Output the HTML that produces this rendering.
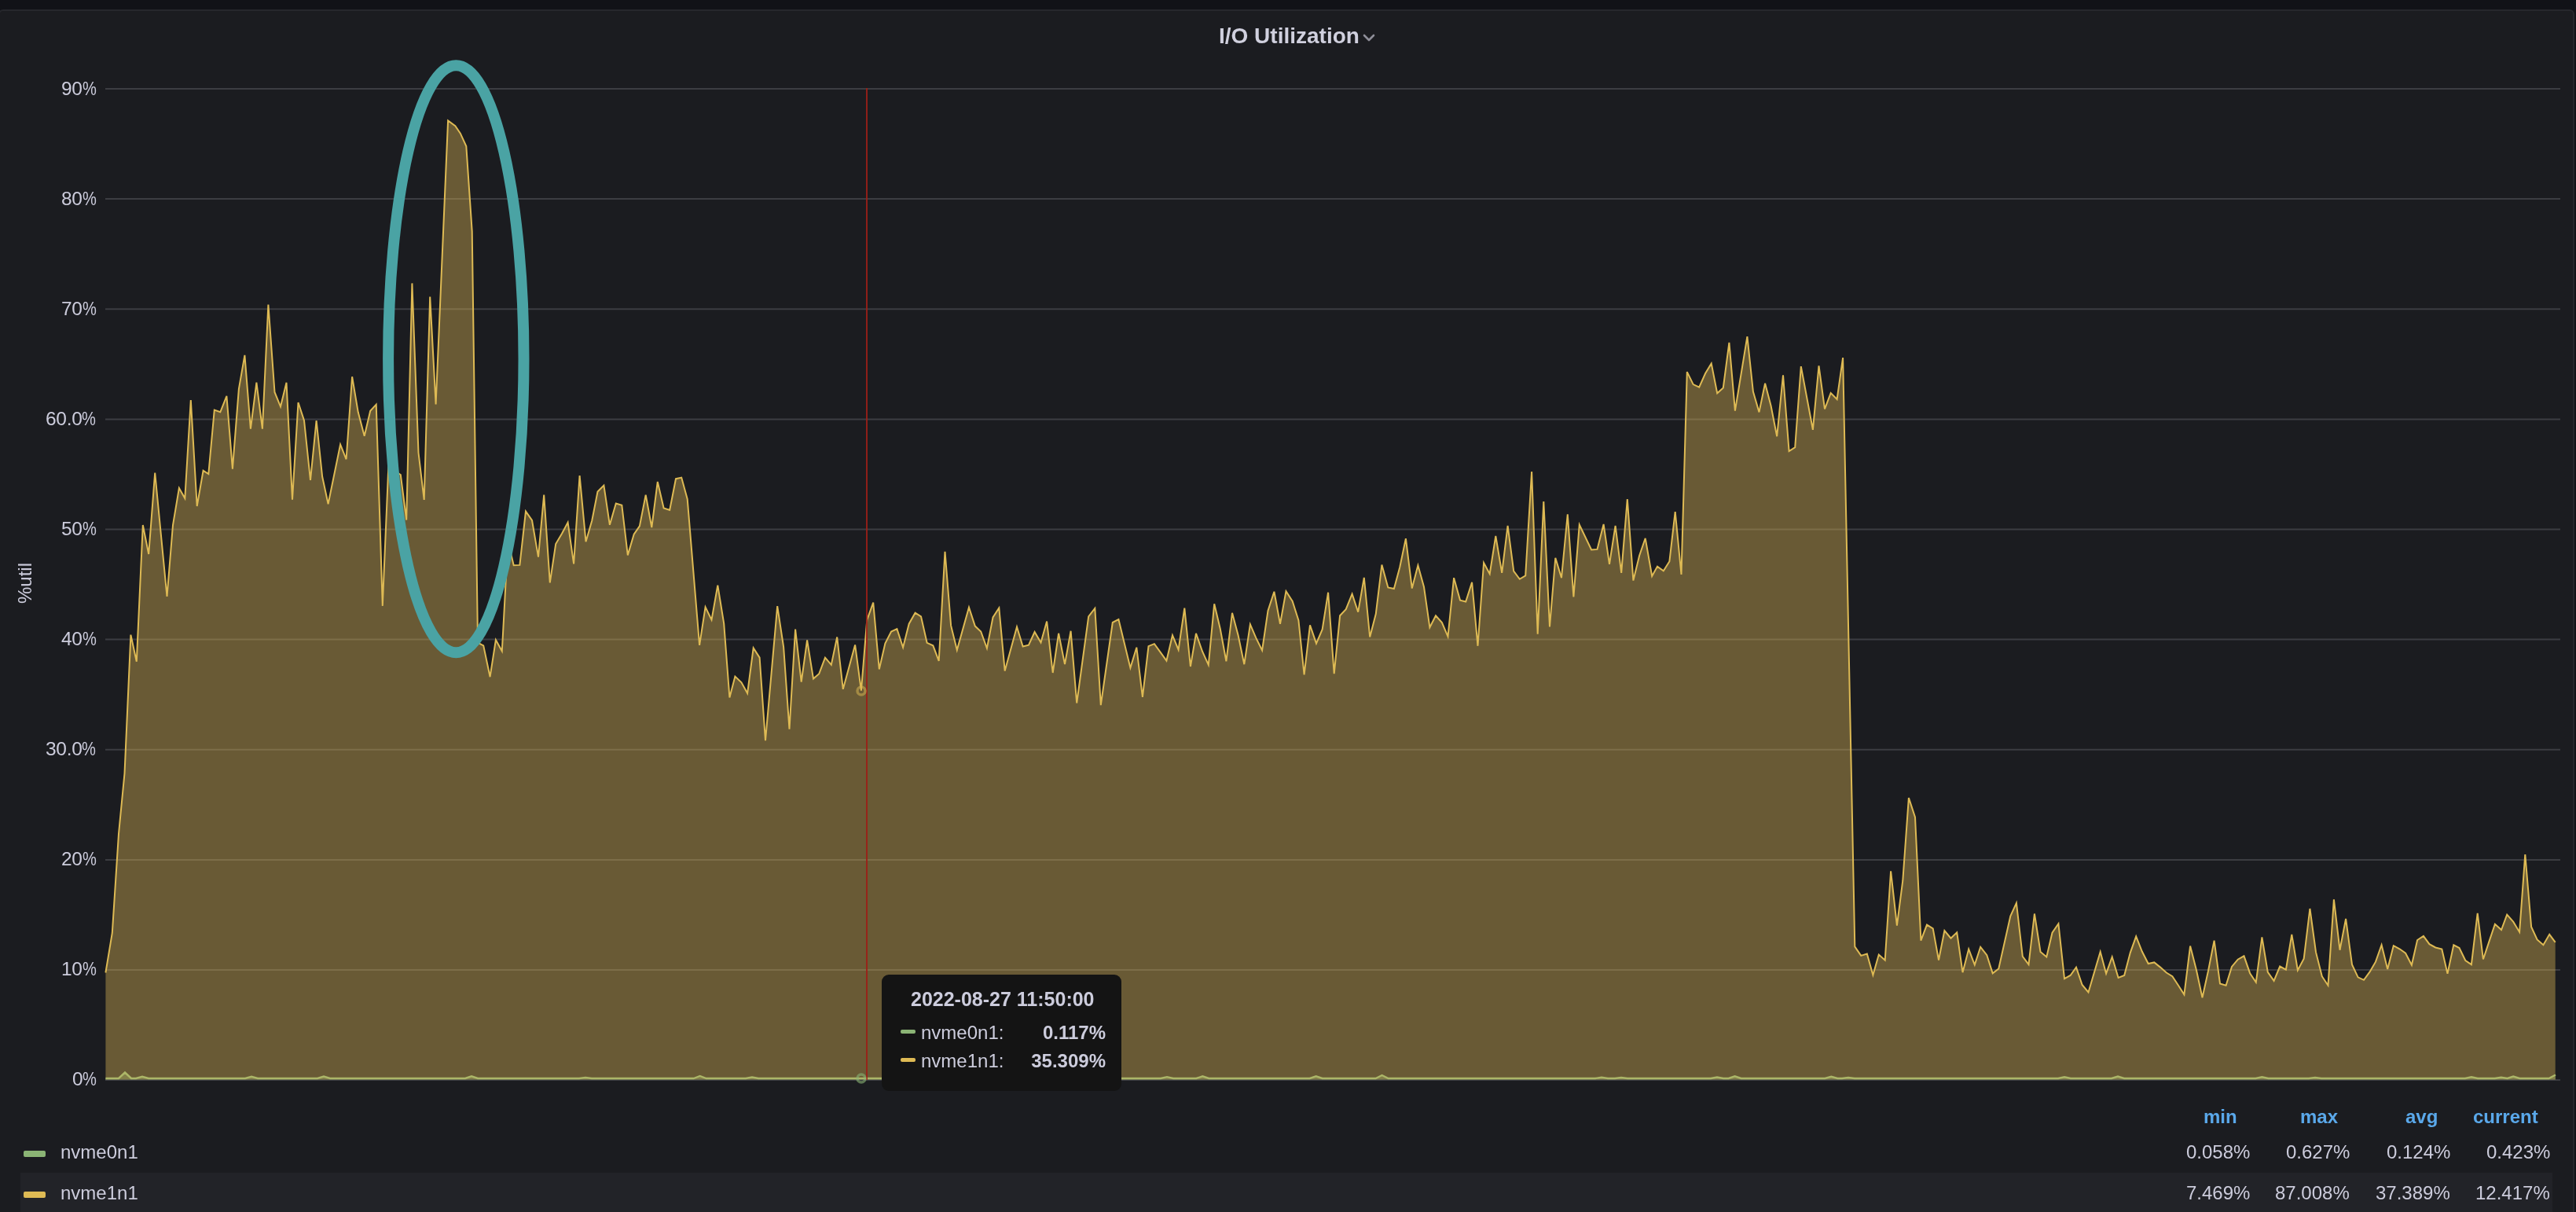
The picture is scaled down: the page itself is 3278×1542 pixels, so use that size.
<!DOCTYPE html>
<html><head><meta charset="utf-8">
<style>
html,body{margin:0;padding:0}
body{width:3278px;height:1542px;overflow:hidden;background:#111217;position:relative;font-family:"Liberation Sans",sans-serif;color:#ccccdc}
.panel{position:absolute;left:-2px;top:12px;width:3278px;height:1600px;background:#1b1c20;border:2px solid #26272c;border-radius:6px;box-sizing:border-box}
.title{position:absolute;left:1551px;top:28.5px;font-size:28px;font-weight:bold;color:#d0d0de;white-space:nowrap;line-height:34px}
.chev{position:absolute;left:1734px;top:43px}
.yl{position:absolute;right:3155.5px;font-size:24.5px;letter-spacing:-0.3px;line-height:28px;color:#ccccdc;white-space:nowrap;text-align:right}
.pc{display:inline-block;transform:scaleX(.82);transform-origin:0 50%;margin-right:-.16em}
.ylab{position:absolute;left:32px;top:742px;transform:translate(-50%,-50%) rotate(-90deg);font-size:24px;line-height:28px;white-space:nowrap}
svg{position:absolute;left:0;top:0}
.title,.yl,.ylab,.lg,.hd,.val,.tt{will-change:transform}
.lg{position:absolute;font-size:24px;line-height:28px;white-space:nowrap}
.sw{position:absolute;border-radius:2px;height:8px;width:28px}
.hd{position:absolute;font-size:24px;font-weight:bold;color:#5aa8ea;line-height:28px;white-space:nowrap;text-align:right}
.val{position:absolute;font-size:24px;line-height:28px;white-space:nowrap;text-align:right}
.hl{position:absolute;left:26px;top:1492px;width:3222px;height:60px;background:#222328}
.tt{position:absolute;left:1122px;top:1240px;width:305px;height:148px;background:#141414;border-radius:9px}
.tt .d{position:absolute;left:37px;top:17px;font-size:25px;font-weight:bold;white-space:nowrap;line-height:28px}
.tt .sw2{position:absolute;left:24px;width:19px;height:5px;border-radius:2px}
.tt .l{position:absolute;left:50px;font-size:24px;white-space:nowrap;line-height:28px}
.tt .v{position:absolute;right:20px;font-size:24px;font-weight:bold;white-space:nowrap;line-height:28px;text-align:right}
</style></head><body>
<div class="panel"></div>
<div class="title">I/O Utilization</div>
<svg class="chev" width="16" height="12" viewBox="0 0 16 12"><path d="M2 2 L8 8 L14 2" fill="none" stroke="#8e8e98" stroke-width="2.6" stroke-linecap="round" stroke-linejoin="round"/></svg>
<div class="yl" style="top:99px">90<span class="pc">%</span></div><div class="yl" style="top:239px">80<span class="pc">%</span></div><div class="yl" style="top:379px">70<span class="pc">%</span></div><div class="yl" style="top:519px">60.0<span class="pc">%</span></div><div class="yl" style="top:659px">50<span class="pc">%</span></div><div class="yl" style="top:799px">40<span class="pc">%</span></div><div class="yl" style="top:939px">30.0<span class="pc">%</span></div><div class="yl" style="top:1079px">20<span class="pc">%</span></div><div class="yl" style="top:1219px">10<span class="pc">%</span></div><div class="yl" style="top:1359px">0<span class="pc">%</span></div>
<div class="ylab">%util</div>
<svg width="3278" height="1542" viewBox="0 0 3278 1542">
<g stroke="#3c3d42" stroke-width="2"><line x1="134" y1="113.0" x2="3258" y2="113.0"/><line x1="134" y1="253.1" x2="3258" y2="253.1"/><line x1="134" y1="393.2" x2="3258" y2="393.2"/><line x1="134" y1="533.4" x2="3258" y2="533.4"/><line x1="134" y1="673.5" x2="3258" y2="673.5"/><line x1="134" y1="813.6" x2="3258" y2="813.6"/><line x1="134" y1="953.8" x2="3258" y2="953.8"/><line x1="134" y1="1093.9" x2="3258" y2="1093.9"/><line x1="134" y1="1234.0" x2="3258" y2="1234.0"/><line x1="134" y1="1374.1" x2="3258" y2="1374.1"/></g>
<path d="M134.4,1373.5 L134.4,1372 151,1372 159,1364.5 167,1372 173,1372 181,1369.8 189,1372 312,1372 320,1369.8 328,1372 404,1372 412,1369.5 420,1372 592,1372 600,1369.3 608,1372 737,1372 745,1371 753,1372 882.7,1372 890.7,1369 898.7,1372 949,1372 957,1370.5 965,1372 1477,1372 1485,1370.2 1493,1372 1522.3,1372 1530.3,1369.3 1538.3,1372 1666.7,1372 1674.7,1369.3 1682.7,1372 1750.6,1372 1758.6,1368 1766.6,1372 2030,1372 2038,1370.8 2046,1372 2055,1372 2063,1371 2071,1372 2177,1372 2185,1370.5 2193,1372 2199.6,1372 2207.6,1369.3 2215.6,1372 2322.3,1372 2330.3,1369.8 2338.3,1372 2344,1372 2352,1371 2360,1372 2619,1372 2627,1370.3 2635,1372 2687,1372 2695,1369.5 2703,1372 2870.4,1372 2878.4,1370.3 2886.4,1372 2938,1372 2946,1371 2954,1372 3136.9,1372 3144.9,1370.3 3152.9,1372 3174.7,1372 3182.7,1370.8 3190.7,1372 3198.2,1369.6 3206.2,1372 3243.5,1372 3252,1367.5 L3252,1373.5 Z" fill="#8bb475" fill-opacity="0.4"/>
<polyline points="134.4,1372 151,1372 159,1364.5 167,1372 173,1372 181,1369.8 189,1372 312,1372 320,1369.8 328,1372 404,1372 412,1369.5 420,1372 592,1372 600,1369.3 608,1372 737,1372 745,1371 753,1372 882.7,1372 890.7,1369 898.7,1372 949,1372 957,1370.5 965,1372 1477,1372 1485,1370.2 1493,1372 1522.3,1372 1530.3,1369.3 1538.3,1372 1666.7,1372 1674.7,1369.3 1682.7,1372 1750.6,1372 1758.6,1368 1766.6,1372 2030,1372 2038,1370.8 2046,1372 2055,1372 2063,1371 2071,1372 2177,1372 2185,1370.5 2193,1372 2199.6,1372 2207.6,1369.3 2215.6,1372 2322.3,1372 2330.3,1369.8 2338.3,1372 2344,1372 2352,1371 2360,1372 2619,1372 2627,1370.3 2635,1372 2687,1372 2695,1369.5 2703,1372 2870.4,1372 2878.4,1370.3 2886.4,1372 2938,1372 2946,1371 2954,1372 3136.9,1372 3144.9,1370.3 3152.9,1372 3174.7,1372 3182.7,1370.8 3190.7,1372 3198.2,1369.6 3206.2,1372 3243.5,1372 3252,1367.5" fill="none" stroke="#8bb475" stroke-width="2.4"/>
<path d="M134.4,1373.5 L134.4,1237.5 142.8,1187 151,1061 158.5,984 166.4,807.6 173.8,841.7 181.8,668 189.2,705 197.2,601.5 212.5,759 220,668 227.9,621 235.3,634 242.8,509 250.7,644 258.6,598.7 265.3,603 272.8,521.6 280.3,524.3 288.4,503.9 295.9,596.6 303.9,494.8 311.4,451.9 318.9,545.7 326.4,486.7 333.9,545.7 341.4,387.5 349.5,499 357,517.3 364.5,486.7 372,635.8 379.5,512 387,535 395,611 402.6,535 410.1,606.3 417.6,641.2 433.1,565.5 440.6,584.3 448.1,479.2 455.7,524.3 463.7,554.8 471.2,522.7 478.7,514.6 486.8,770.9 494.3,594 509.8,604 517.2,661.5 524.4,360.4 532.5,576 539.7,636 547.2,377.6 554.6,514.4 570.1,153.4 579.3,160.2 585.8,169.7 593.3,186 600.7,294.4 608,817.6 615.2,821.3 623.6,861.2 630.9,814 638.8,828.5 646.4,689 653.7,719.2 661.4,718.9 669,650.6 677,662 685,708.7 692.2,629.5 699.8,741.4 707.2,692 715.1,678.8 722.6,664.7 730.1,717.4 737.6,605.1 745.5,689.2 753.3,662.2 760.5,625.5 768.4,617.6 775.9,667.8 783.8,640.5 791.3,642.7 798.8,706.4 806.7,679.8 813.9,669.4 821.7,629.6 829.3,671 836.8,612.9 844.6,646.5 852.2,649 860,609.2 867.2,607.6 874.7,634.9 890.1,820.9 897.6,772.3 905.5,788.6 913.3,744.7 921.2,793.3 928.4,887.5 935.4,860.6 943.5,868.3 951.1,882.1 958.7,824.4 966.6,836.6 974,942.2 989.2,771.2 997.1,823.2 1004.5,927.6 1012.1,800.6 1019.7,867.6 1027.1,814.4 1035,863.6 1042.3,857.2 1050,836.6 1057.8,845.9 1065.2,810.5 1072.8,876.8 1088.1,820.4 1095.9,878.7 1103.3,788.6 1111.2,766.6 1118.8,851.4 1126.4,818.6 1134.1,803.6 1141.4,800.1 1149.1,823.7 1156.7,793.7 1164.6,779.7 1172,784.3 1179.6,817.8 1187.3,821.3 1194.7,840.9 1202.5,701.9 1210.1,795.9 1217.8,827.1 1233,772.8 1240.8,796.6 1248.2,803.5 1255.9,824.8 1263.5,785.5 1271.3,773.5 1278.7,853.6 1294,797.5 1301.6,822.5 1309,820.6 1316.6,804 1324.5,817.4 1332.1,790.6 1339.7,856 1347.1,805.8 1355,845.1 1362.6,802.8 1370.2,894.5 1385.2,784.3 1393.3,774 1400.8,897.2 1415.8,792 1423.4,787.9 1438.4,849.8 1446.3,823.7 1453.9,886.8 1461.5,822.1 1468.9,819.1 1476.5,829.7 1484.4,840.6 1492,808.2 1499.6,826.7 1507.3,773.6 1514.9,848 1522,805.9 1530.1,829 1537.8,845.9 1545.2,768.3 1552.8,800.2 1560.4,841.3 1568,779.8 1575.6,808.2 1583.3,845.2 1590.9,794.4 1598.3,811.7 1606.1,827.4 1613.5,777 1621.4,752.8 1629,793.7 1636.5,752.1 1644.6,764.8 1652.4,789.1 1659.6,858.4 1667,795.3 1675,818.6 1682.7,800.6 1690.1,753.7 1697.7,857.2 1705.1,783.3 1712.7,775.2 1720.6,755.6 1728.2,778.7 1735.8,734.8 1743.2,810.5 1750.8,781 1758.4,718.6 1766.3,747.5 1773.9,749.1 1781.3,721.4 1788.9,685.1 1796.8,748.6 1804.4,719.3 1812,746.8 1819.4,798.3 1827,783.3 1834.9,792.1 1842.5,809.8 1850.1,735.2 1858,763.6 1865.2,765.5 1873.1,740.9 1880.5,821.8 1888.1,716 1895.7,730.1 1903.3,682 1911.2,728.9 1918.6,668.9 1926.2,726.6 1933.8,736.8 1941.2,732.4 1949.1,600 1956.7,806.8 1964.3,638.1 1972,797.5 1979.3,709.8 1987,735.2 1994.8,654.3 2002.4,759.4 2009.8,667.5 2025.1,699.4 2032.5,698.9 2040.6,667 2048,717.8 2055.6,668.9 2063.2,728.9 2070.8,635.1 2078.4,738.6 2086.1,707 2093.7,684.8 2102.2,733 2109,720.6 2116.8,726.2 2124.4,714.2 2131.7,651.1 2139.5,731 2146.8,473.1 2154.7,489.1 2162.2,492.7 2170.1,475 2177.7,462.4 2185.2,500.3 2192.8,493.5 2200.4,435.8 2207.9,522.7 2223.4,428.2 2230.9,498.3 2238.5,524.4 2246.1,487.7 2253.6,516.5 2261.2,555.2 2269,477.3 2276.6,574 2284.2,569.2 2291.8,466.1 2306.9,546.8 2314.5,465.3 2322,520.4 2329.7,500 2337.6,508 2345.1,455.1 2360.3,1204.4 2368.2,1215.9 2375.8,1213.6 2383.4,1240.6 2390.8,1214.5 2398.7,1221.7 2406.1,1108.3 2413.9,1177.6 2421.3,1120.5 2428.9,1015 2437,1039.7 2444.4,1196.7 2452,1176.6 2459.7,1181.3 2467,1221.5 2474.4,1184 2482.5,1193.7 2490.2,1186.3 2497.5,1237.2 2505.2,1207.6 2512.8,1227.5 2520.2,1204.8 2528.3,1215.2 2535.7,1238.3 2543.3,1232.5 2558.3,1165.6 2565.9,1148.9 2573.8,1216.8 2581.5,1227.1 2588.9,1162.5 2596.5,1211 2604.3,1217.4 2611.5,1186.7 2619.4,1175.2 2627,1245.2 2634.6,1241 2642,1230.6 2649.6,1253 2657.5,1262.5 2672.7,1211 2680.1,1238.7 2687.7,1217.4 2695.6,1244 2703.2,1241 2710.8,1212.1 2718.2,1191.3 2725.8,1210.5 2733.7,1226 2741.3,1224.4 2749,1230.6 2756.8,1237.5 2764.4,1242.2 2772,1253.7 2779.4,1265.3 2787.1,1203.6 2794.9,1234.1 2802.5,1269.2 2810,1235.2 2817.6,1196.7 2825,1251.4 2832.6,1253.7 2840,1229.9 2847.7,1220.7 2855.5,1216.3 2863.1,1238.2 2870.8,1249.8 2878.4,1192.5 2885.8,1236.8 2893.6,1247.9 2901.2,1229.5 2908.9,1233.6 2916.3,1189 2923.9,1234.5 2931.7,1219.7 2939.4,1156 2947,1211.4 2954.8,1242.2 2962.5,1253.7 2969.9,1144.4 2977.5,1208.7 2985.1,1168.9 2993,1227.1 3000.6,1243.3 3008,1246.8 3015.6,1236.4 3023,1223.7 3030.6,1202.2 3038.2,1232.9 3045.8,1203.2 3053.9,1207.5 3061.1,1212.7 3068.9,1227.8 3076.1,1196 3083.9,1190.8 3091.4,1201.2 3099.2,1205.5 3107.3,1207.5 3114.5,1238.7 3122.3,1202.3 3129.5,1206.1 3137.3,1222 3144.9,1227.2 3152.7,1161.9 3159.9,1220.5 3167.1,1198.9 3174.9,1175.8 3183,1183 3190.2,1163.6 3198.3,1172.9 3206.1,1185.9 3213.3,1087.1 3221.1,1179.2 3228.6,1195.4 3236.4,1202.3 3244.2,1188.8 3251.7,1198.9 L3251.7,1373.5 Z" fill="#deba54" fill-opacity="0.4"/>
<polyline points="134.4,1237.5 142.8,1187 151,1061 158.5,984 166.4,807.6 173.8,841.7 181.8,668 189.2,705 197.2,601.5 212.5,759 220,668 227.9,621 235.3,634 242.8,509 250.7,644 258.6,598.7 265.3,603 272.8,521.6 280.3,524.3 288.4,503.9 295.9,596.6 303.9,494.8 311.4,451.9 318.9,545.7 326.4,486.7 333.9,545.7 341.4,387.5 349.5,499 357,517.3 364.5,486.7 372,635.8 379.5,512 387,535 395,611 402.6,535 410.1,606.3 417.6,641.2 433.1,565.5 440.6,584.3 448.1,479.2 455.7,524.3 463.7,554.8 471.2,522.7 478.7,514.6 486.8,770.9 494.3,594 509.8,604 517.2,661.5 524.4,360.4 532.5,576 539.7,636 547.2,377.6 554.6,514.4 570.1,153.4 579.3,160.2 585.8,169.7 593.3,186 600.7,294.4 608,817.6 615.2,821.3 623.6,861.2 630.9,814 638.8,828.5 646.4,689 653.7,719.2 661.4,718.9 669,650.6 677,662 685,708.7 692.2,629.5 699.8,741.4 707.2,692 715.1,678.8 722.6,664.7 730.1,717.4 737.6,605.1 745.5,689.2 753.3,662.2 760.5,625.5 768.4,617.6 775.9,667.8 783.8,640.5 791.3,642.7 798.8,706.4 806.7,679.8 813.9,669.4 821.7,629.6 829.3,671 836.8,612.9 844.6,646.5 852.2,649 860,609.2 867.2,607.6 874.7,634.9 890.1,820.9 897.6,772.3 905.5,788.6 913.3,744.7 921.2,793.3 928.4,887.5 935.4,860.6 943.5,868.3 951.1,882.1 958.7,824.4 966.6,836.6 974,942.2 989.2,771.2 997.1,823.2 1004.5,927.6 1012.1,800.6 1019.7,867.6 1027.1,814.4 1035,863.6 1042.3,857.2 1050,836.6 1057.8,845.9 1065.2,810.5 1072.8,876.8 1088.1,820.4 1095.9,878.7 1103.3,788.6 1111.2,766.6 1118.8,851.4 1126.4,818.6 1134.1,803.6 1141.4,800.1 1149.1,823.7 1156.7,793.7 1164.6,779.7 1172,784.3 1179.6,817.8 1187.3,821.3 1194.7,840.9 1202.5,701.9 1210.1,795.9 1217.8,827.1 1233,772.8 1240.8,796.6 1248.2,803.5 1255.9,824.8 1263.5,785.5 1271.3,773.5 1278.7,853.6 1294,797.5 1301.6,822.5 1309,820.6 1316.6,804 1324.5,817.4 1332.1,790.6 1339.7,856 1347.1,805.8 1355,845.1 1362.6,802.8 1370.2,894.5 1385.2,784.3 1393.3,774 1400.8,897.2 1415.8,792 1423.4,787.9 1438.4,849.8 1446.3,823.7 1453.9,886.8 1461.5,822.1 1468.9,819.1 1476.5,829.7 1484.4,840.6 1492,808.2 1499.6,826.7 1507.3,773.6 1514.9,848 1522,805.9 1530.1,829 1537.8,845.9 1545.2,768.3 1552.8,800.2 1560.4,841.3 1568,779.8 1575.6,808.2 1583.3,845.2 1590.9,794.4 1598.3,811.7 1606.1,827.4 1613.5,777 1621.4,752.8 1629,793.7 1636.5,752.1 1644.6,764.8 1652.4,789.1 1659.6,858.4 1667,795.3 1675,818.6 1682.7,800.6 1690.1,753.7 1697.7,857.2 1705.1,783.3 1712.7,775.2 1720.6,755.6 1728.2,778.7 1735.8,734.8 1743.2,810.5 1750.8,781 1758.4,718.6 1766.3,747.5 1773.9,749.1 1781.3,721.4 1788.9,685.1 1796.8,748.6 1804.4,719.3 1812,746.8 1819.4,798.3 1827,783.3 1834.9,792.1 1842.5,809.8 1850.1,735.2 1858,763.6 1865.2,765.5 1873.1,740.9 1880.5,821.8 1888.1,716 1895.7,730.1 1903.3,682 1911.2,728.9 1918.6,668.9 1926.2,726.6 1933.8,736.8 1941.2,732.4 1949.1,600 1956.7,806.8 1964.3,638.1 1972,797.5 1979.3,709.8 1987,735.2 1994.8,654.3 2002.4,759.4 2009.8,667.5 2025.1,699.4 2032.5,698.9 2040.6,667 2048,717.8 2055.6,668.9 2063.2,728.9 2070.8,635.1 2078.4,738.6 2086.1,707 2093.7,684.8 2102.2,733 2109,720.6 2116.8,726.2 2124.4,714.2 2131.7,651.1 2139.5,731 2146.8,473.1 2154.7,489.1 2162.2,492.7 2170.1,475 2177.7,462.4 2185.2,500.3 2192.8,493.5 2200.4,435.8 2207.9,522.7 2223.4,428.2 2230.9,498.3 2238.5,524.4 2246.1,487.7 2253.6,516.5 2261.2,555.2 2269,477.3 2276.6,574 2284.2,569.2 2291.8,466.1 2306.9,546.8 2314.5,465.3 2322,520.4 2329.7,500 2337.6,508 2345.1,455.1 2360.3,1204.4 2368.2,1215.9 2375.8,1213.6 2383.4,1240.6 2390.8,1214.5 2398.7,1221.7 2406.1,1108.3 2413.9,1177.6 2421.3,1120.5 2428.9,1015 2437,1039.7 2444.4,1196.7 2452,1176.6 2459.7,1181.3 2467,1221.5 2474.4,1184 2482.5,1193.7 2490.2,1186.3 2497.5,1237.2 2505.2,1207.6 2512.8,1227.5 2520.2,1204.8 2528.3,1215.2 2535.7,1238.3 2543.3,1232.5 2558.3,1165.6 2565.9,1148.9 2573.8,1216.8 2581.5,1227.1 2588.9,1162.5 2596.5,1211 2604.3,1217.4 2611.5,1186.7 2619.4,1175.2 2627,1245.2 2634.6,1241 2642,1230.6 2649.6,1253 2657.5,1262.5 2672.7,1211 2680.1,1238.7 2687.7,1217.4 2695.6,1244 2703.2,1241 2710.8,1212.1 2718.2,1191.3 2725.8,1210.5 2733.7,1226 2741.3,1224.4 2749,1230.6 2756.8,1237.5 2764.4,1242.2 2772,1253.7 2779.4,1265.3 2787.1,1203.6 2794.9,1234.1 2802.5,1269.2 2810,1235.2 2817.6,1196.7 2825,1251.4 2832.6,1253.7 2840,1229.9 2847.7,1220.7 2855.5,1216.3 2863.1,1238.2 2870.8,1249.8 2878.4,1192.5 2885.8,1236.8 2893.6,1247.9 2901.2,1229.5 2908.9,1233.6 2916.3,1189 2923.9,1234.5 2931.7,1219.7 2939.4,1156 2947,1211.4 2954.8,1242.2 2962.5,1253.7 2969.9,1144.4 2977.5,1208.7 2985.1,1168.9 2993,1227.1 3000.6,1243.3 3008,1246.8 3015.6,1236.4 3023,1223.7 3030.6,1202.2 3038.2,1232.9 3045.8,1203.2 3053.9,1207.5 3061.1,1212.7 3068.9,1227.8 3076.1,1196 3083.9,1190.8 3091.4,1201.2 3099.2,1205.5 3107.3,1207.5 3114.5,1238.7 3122.3,1202.3 3129.5,1206.1 3137.3,1222 3144.9,1227.2 3152.7,1161.9 3159.9,1220.5 3167.1,1198.9 3174.9,1175.8 3183,1183 3190.2,1163.6 3198.3,1172.9 3206.1,1185.9 3213.3,1087.1 3221.1,1179.2 3228.6,1195.4 3236.4,1202.3 3244.2,1188.8 3251.7,1198.9" fill="none" stroke="#deba54" stroke-width="2" stroke-linejoin="miter" stroke-miterlimit="4"/>
<line x1="1103" y1="112" x2="1103" y2="1374" stroke="#9c1f17" stroke-opacity="0.9" stroke-width="2"/>
<circle cx="1096" cy="879" r="5" fill="none" stroke="#deba54" stroke-opacity="0.5" stroke-width="3.5"/>
<circle cx="1096" cy="1372" r="5" fill="none" stroke="#8bb475" stroke-opacity="0.6" stroke-width="3.5"/>
<ellipse cx="580.3" cy="456.7" rx="86.2" ry="373.5" fill="none" stroke="#4aa3a4" stroke-width="14"/>
</svg>
<div class="hl"></div>
<div class="sw" style="left:30px;top:1464px;background:#8bb475"></div>
<div class="lg" style="left:77px;top:1452px">nvme0n1</div>
<div class="sw" style="left:30px;top:1516px;background:#deba54"></div>
<div class="lg" style="left:77px;top:1504px">nvme1n1</div>
<div class="hd" style="right:431px;top:1407px">min</div>
<div class="hd" style="right:303px;top:1407px">max</div>
<div class="hd" style="right:176px;top:1407px">avg</div>
<div class="hd" style="right:48px;top:1407px">current</div>
<div class="val" style="right:415px;top:1452px">0.058%</div>
<div class="val" style="right:288px;top:1452px">0.627%</div>
<div class="val" style="right:160px;top:1452px">0.124%</div>
<div class="val" style="right:33px;top:1452px">0.423%</div>
<div class="val" style="right:415px;top:1504px">7.469%</div>
<div class="val" style="right:288px;top:1504px">87.008%</div>
<div class="val" style="right:160px;top:1504px">37.389%</div>
<div class="val" style="right:33px;top:1504px">12.417%</div>
<div class="tt">
<div class="d">2022-08-27 11:50:00</div>
<div class="sw2" style="top:70px;background:#8bb475"></div>
<div class="l" style="top:60px">nvme0n1:</div>
<div class="v" style="top:60px">0.117%</div>
<div class="sw2" style="top:106px;background:#deba54"></div>
<div class="l" style="top:96px">nvme1n1:</div>
<div class="v" style="top:96px">35.309%</div>
</div>
</body></html>
